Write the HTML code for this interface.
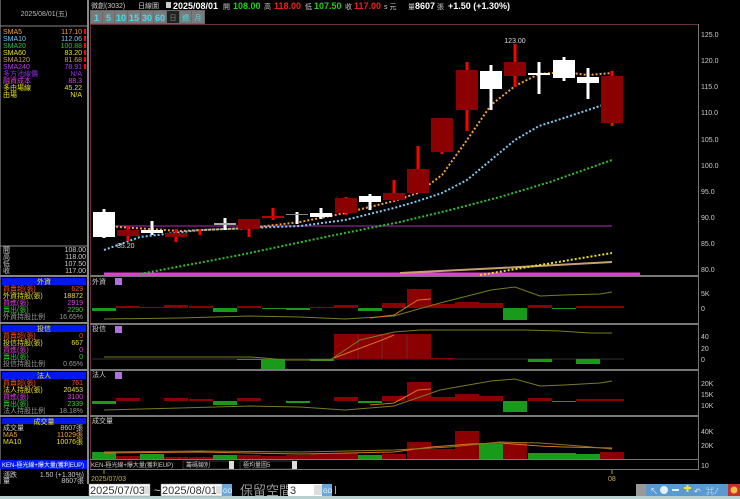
<!DOCTYPE html>
<html><head><meta charset="utf-8"><style>
html,body{margin:0;padding:0;background:#000;width:740px;height:499px;overflow:hidden}
svg{display:block}
text{font-family:"Liberation Sans","Noto Sans CJK TC",sans-serif}
.s{font-size:7px}
.m{font-size:8px}
</style></head><body>
<svg width="740" height="499" viewBox="0 0 740 499" xmlns="http://www.w3.org/2000/svg">
<rect width="740" height="499" fill="#000"/>
<rect x="87" y="0" width="2" height="484" fill="#8a8a8a"/>
<rect x="0" y="0" width="1" height="484" fill="#555"/>
<line x1="0" y1="26" x2="87" y2="26" stroke="#888"/>
<text x="44" y="16" class="s" fill="#bbb" text-anchor="middle">2025/08/01(五)</text>
<g class="s">
<text x="3" y="34" fill="#f0a040">SMA5</text><text x="82" y="34" fill="#f0a040" text-anchor="end">117.10</text>
<text x="3" y="41" fill="#7fc8f0">SMA10</text><text x="82" y="41" fill="#7fc8f0" text-anchor="end">112.06</text>
<text x="3" y="48" fill="#30c030">SMA20</text><text x="82" y="48" fill="#30c030" text-anchor="end">100.88</text>
<text x="3" y="55" fill="#e8e020">SMA60</text><text x="82" y="55" fill="#e8e020" text-anchor="end">83.20</text>
<text x="3" y="62" fill="#c8a070">SMA120</text><text x="82" y="62" fill="#c8a070" text-anchor="end">81.68</text>
<text x="3" y="69" fill="#b040e0">SMA240</text><text x="82" y="69" fill="#b040e0" text-anchor="end">78.91</text>
<text x="3" y="76" fill="#9030e0">多方池線價</text><text x="82" y="76" fill="#9030e0" text-anchor="end">N/A</text>
<text x="3" y="83" fill="#e040e0">融資成本</text><text x="82" y="83" fill="#e040e0" text-anchor="end">88.3</text>
<text x="3" y="90" fill="#e8e020">多由場線</text><text x="82" y="90" fill="#e8e020" text-anchor="end">45.22</text>
<text x="3" y="97" fill="#e8e020">由場</text><text x="82" y="97" fill="#e8e020" text-anchor="end">N/A</text>
</g>
<g fill="#f00"><rect x="84" y="29" width="2" height="5"/><rect x="84" y="36" width="2" height="5"/><rect x="84" y="43" width="2" height="5"/><rect x="84" y="50" width="2" height="5"/><rect x="84" y="57" width="2" height="5"/><rect x="84" y="64" width="2" height="5"/></g>
<line x1="0" y1="246" x2="87" y2="246" stroke="#888"/>
<g class="s" fill="#ccc">
<text x="3" y="252">開</text><text x="86" y="252" text-anchor="end">108.00</text>
<text x="3" y="259">高</text><text x="86" y="259" text-anchor="end">118.00</text>
<text x="3" y="266">低</text><text x="86" y="266" text-anchor="end">107.50</text>
<text x="3" y="273">收</text><text x="86" y="273" text-anchor="end">117.00</text>
</g>
<line x1="0" y1="276" x2="87" y2="276" stroke="#888" stroke-width="2"/>
<rect x="2" y="278" width="84" height="7" fill="#0018f0"/>
<text x="44" y="284" class="s" fill="#f0e000" text-anchor="middle">外資</text>
<g class="s">
<text x="3" y="291" fill="#ff5020">買賣超(張)</text><text x="83" y="291" fill="#ff5020" text-anchor="end">629</text>
<text x="3" y="298" fill="#e8e020">外資持股(張)</text><text x="83" y="298" fill="#e8e020" text-anchor="end">18872</text>
<text x="3" y="305" fill="#e040e0">買進(張)</text><text x="83" y="305" fill="#e040e0" text-anchor="end">2919</text>
<text x="3" y="312" fill="#30d030">賣出(張)</text><text x="83" y="312" fill="#30d030" text-anchor="end">2290</text>
<text x="3" y="319" fill="#999">外資持股比例</text><text x="83" y="319" fill="#999" text-anchor="end">16.65%</text>
</g>
<line x1="0" y1="323" x2="87" y2="323" stroke="#888" stroke-width="2"/>
<rect x="2" y="325" width="84" height="7" fill="#0018f0"/>
<text x="44" y="331" class="s" fill="#f0e000" text-anchor="middle">投信</text>
<g class="s">
<text x="3" y="338" fill="#ff5020">買賣超(張)</text><text x="83" y="338" fill="#ff5020" text-anchor="end">0</text>
<text x="3" y="345" fill="#e8e020">投信持股(張)</text><text x="83" y="345" fill="#e8e020" text-anchor="end">667</text>
<text x="3" y="352" fill="#e040e0">買進(張)</text><text x="83" y="352" fill="#e040e0" text-anchor="end">0</text>
<text x="3" y="359" fill="#30d030">賣出(張)</text><text x="83" y="359" fill="#30d030" text-anchor="end">0</text>
<text x="3" y="366" fill="#999">投信持股比例</text><text x="83" y="366" fill="#999" text-anchor="end">0.65%</text>
</g>
<line x1="0" y1="370" x2="87" y2="370" stroke="#888" stroke-width="2"/>
<rect x="2" y="372" width="84" height="7" fill="#0018f0"/>
<text x="44" y="378" class="s" fill="#f0e000" text-anchor="middle">法人</text>
<g class="s">
<text x="3" y="385" fill="#ff5020">買賣超(張)</text><text x="83" y="385" fill="#ff5020" text-anchor="end">761</text>
<text x="3" y="392" fill="#e8e020">法人持股(張)</text><text x="83" y="392" fill="#e8e020" text-anchor="end">20453</text>
<text x="3" y="399" fill="#e040e0">買進(張)</text><text x="83" y="399" fill="#e040e0" text-anchor="end">3100</text>
<text x="3" y="406" fill="#30d030">賣出(張)</text><text x="83" y="406" fill="#30d030" text-anchor="end">2339</text>
<text x="3" y="413" fill="#999">法人持股比例</text><text x="83" y="413" fill="#999" text-anchor="end">18.18%</text>
</g>
<line x1="0" y1="416" x2="87" y2="416" stroke="#888" stroke-width="2"/>
<rect x="2" y="418" width="84" height="6" fill="#0018f0"/>
<text x="44" y="424" class="s" fill="#f0e000" text-anchor="middle">成交量</text>
<g class="s">
<text x="3" y="430" fill="#ccc">成交量</text><text x="83" y="430" fill="#ccc" text-anchor="end">8607張</text>
<text x="3" y="437" fill="#f0a040">MA5</text><text x="83" y="437" fill="#f0a040" text-anchor="end">11029張</text>
<text x="3" y="444" fill="#e8e020">MA10</text><text x="83" y="444" fill="#e8e020" text-anchor="end">10076張</text>
</g>
<rect x="0" y="460" width="87" height="9" fill="#0018f0"/>
<text x="2" y="467" font-size="6" fill="#fff">KEN-極光線+爆大量(獲利EUP)</text>
<g class="s" fill="#ccc">
<text x="3" y="477">漲跌</text><text x="84" y="477" text-anchor="end">1.50 (+1.30%)</text>
<text x="3" y="483">量</text><text x="84" y="483" text-anchor="end">8607張</text>
</g>

<text x="91" y="8" class="s" fill="#ccc">微創(3032)</text>
<text x="138" y="8" class="s" fill="#ccc">日線圖</text>
<rect x="166" y="2" width="5" height="6" fill="#ccc"/>
<g font-size="9" font-weight="bold">
<text x="173" y="9" fill="#fff">2025/08/01</text>
<text x="223" y="9" class="s" fill="#ccc" font-weight="normal">開</text>
<text x="233" y="9" fill="#20d020">108.00</text>
<text x="264" y="9" class="s" fill="#ccc" font-weight="normal">高</text>
<text x="274" y="9" fill="#f02020">118.00</text>
<text x="305" y="9" class="s" fill="#ccc" font-weight="normal">低</text>
<text x="314" y="9" fill="#20d020">107.50</text>
<text x="345" y="9" class="s" fill="#ccc" font-weight="normal">收</text>
<text x="354" y="9" fill="#f02020">117.00</text>
<text x="384" y="9" class="s" fill="#ccc" font-weight="normal">s 元</text>
<text x="408" y="9" class="s" fill="#ccc" font-weight="normal">量</text>
<text x="415" y="9" fill="#fff">8607</text>
<text x="437" y="9" class="s" fill="#ccc" font-weight="normal">張</text>
<text x="448" y="9" fill="#fff">+1.50 (+1.30%)</text>
</g>
<rect x="90" y="10" width="115" height="14" fill="#6a6a6a"/>
<g fill="#7a7a7a"><rect x="91" y="11" width="11" height="12"/><rect x="103" y="11" width="11" height="12"/><rect x="115" y="11" width="12" height="12"/><rect x="128" y="11" width="12" height="12"/><rect x="141" y="11" width="12" height="12"/><rect x="154" y="11" width="12" height="12"/><rect x="180" y="11" width="11" height="12"/><rect x="192" y="11" width="12" height="12"/></g>
<rect x="167" y="11" width="12" height="12" fill="#222"/>
<g font-size="9" font-weight="bold" fill="#40e0f0" text-anchor="middle">
<text x="96.5" y="21">1</text><text x="108.5" y="21">5</text><text x="121" y="21">10</text><text x="134" y="21">15</text><text x="147" y="21">30</text><text x="160" y="21">60</text>
</g>
<g class="s" fill="#40e0f0" text-anchor="middle"><text x="173" y="20" fill="#888">日</text><text x="185.5" y="20">週</text><text x="198" y="20">月</text></g>

<line x1="90" y1="24.5" x2="699" y2="24.5" stroke="#6a3040"/>
<line x1="698.5" y1="24" x2="698.5" y2="470" stroke="#777"/>
<line x1="90.5" y1="24" x2="90.5" y2="470" stroke="#6a3040"/>
<g fill="#777"><rect x="90" y="275" width="609" height="2"/><rect x="90" y="323" width="609" height="2"/><rect x="90" y="369" width="609" height="2"/><rect x="90" y="415" width="609" height="2"/><rect x="90" y="459" width="609" height="1"/><rect x="90" y="469" width="609" height="1"/></g>

<g class="s" fill="#ccc">
<text x="701" y="37">125.0</text><text x="701" y="63">120.0</text><text x="701" y="89">115.0</text><text x="701" y="115">110.0</text><text x="701" y="142">105.0</text><text x="701" y="168">100.0</text><text x="701" y="194">95.0</text><text x="701" y="220">90.0</text><text x="701" y="246">85.0</text><text x="701" y="272">80.0</text>
<text x="701" y="296">5K</text><text x="701" y="311">0</text>
<text x="701" y="339">40</text><text x="701" y="351">20</text><text x="701" y="362">0</text>
<text x="701" y="386">20K</text><text x="701" y="397">15K</text><text x="701" y="408">10K</text>
<text x="701" y="434">40K</text><text x="701" y="448">20K</text><text x="701" y="468">10</text>
</g>

<line x1="104" y1="226" x2="612" y2="226" stroke="#7a1a7a" stroke-width="1.5"/>
<line x1="104" y1="274" x2="640" y2="274" stroke="#e040d0" stroke-width="3"/>
<polyline fill="none" stroke="#c8a070" stroke-width="2" points="400,273 500,268 612,262"/>
<polyline fill="none" stroke="#e8e020" stroke-width="2" stroke-dasharray="2,2" points="480,275 540,265 612,253"/>
<polyline fill="none" stroke="#30c030" stroke-width="2" stroke-dasharray="2,2" points="140,274 240,255 330,236 400,222 450,210 500,197 550,182 612,160"/>
<polyline fill="none" stroke="#7fc8f0" stroke-width="2" stroke-dasharray="2,2" points="104,250 140,237 200,230 300,226 345,220 394,208 418,201 442,193 467,180 491,160 515,140 539,126 564,118 588,110 612,102"/>
<polyline fill="none" stroke="#f0a040" stroke-width="2" stroke-dasharray="2,2" points="104,226 180,231 250,228 300,222 345,213 394,201 418,193 442,175 467,140 491,105 515,86 539,74 564,72 588,75 612,73"/>

<g fill="#f00">
<rect x="126.5" y="226" width="3" height="15"/><rect x="174.5" y="229" width="3" height="13"/><rect x="198.5" y="229" width="3" height="6"/><rect x="247.5" y="219" width="3" height="18"/><rect x="271.5" y="208" width="3" height="12"/><rect x="344.5" y="197" width="3" height="18"/><rect x="392.5" y="180" width="3" height="21"/><rect x="416.5" y="146" width="3" height="47"/><rect x="440.5" y="118" width="3" height="36"/><rect x="465.5" y="62" width="3" height="69"/><rect x="513.5" y="44" width="3" height="43"/><rect x="610.5" y="71" width="3" height="55"/>
</g>
<g fill="#8b0000">
<rect x="117" y="230" width="22" height="6"/><rect x="165" y="233" width="22" height="4"/><rect x="238" y="219" width="22" height="10"/><rect x="262" y="216" width="22" height="2" fill="#c00000"/><rect x="335" y="198" width="22" height="15"/><rect x="383" y="193" width="22" height="7"/><rect x="407" y="169" width="22" height="24"/><rect x="431" y="118" width="22" height="34"/><rect x="456" y="70" width="22" height="40"/><rect x="504" y="62" width="22" height="14"/><rect x="601" y="76" width="22" height="47"/>
</g>
<g fill="#fff">
<rect x="102.5" y="209" width="3" height="29"/><rect x="93" y="212" width="22" height="25"/>
<rect x="150.5" y="221" width="3" height="14"/><rect x="141" y="230" width="22" height="3"/>
<rect x="223.5" y="218" width="3" height="12"/><rect x="214" y="223" width="22" height="2" fill="#aaa"/>
<rect x="295.5" y="212" width="3" height="12"/><rect x="286" y="214" width="22" height="1" fill="#888"/>
<rect x="319.5" y="208" width="3" height="11"/><rect x="310" y="213" width="22" height="4"/>
<rect x="368.5" y="194" width="3" height="16"/><rect x="359" y="196" width="22" height="6"/>
<rect x="489.5" y="65" width="3" height="45"/><rect x="480" y="71" width="22" height="18"/>
<rect x="537.5" y="62" width="3" height="32"/><rect x="528" y="73" width="22" height="2"/>
<rect x="562.5" y="57" width="3" height="24"/><rect x="553" y="60" width="22" height="18"/>
<rect x="586.5" y="68" width="3" height="31"/><rect x="577" y="77" width="22" height="6"/>
</g>
<text x="515" y="43" class="s" fill="#ddd" text-anchor="middle">123.00</text>
<text x="117" y="248" class="s" fill="#ddd">85.20</text>

<g class="s" fill="#ccc"><text x="92" y="284">外資</text><text x="92" y="331">投信</text><text x="92" y="377">法人</text><text x="92" y="423">成交量</text></g>
<g fill="#b070e0"><rect x="115" y="278" width="7" height="7"/><rect x="115" y="326" width="7" height="7"/><rect x="115" y="372" width="7" height="7"/></g>

<g fill="#1a9a1a"><rect x="92" y="308" width="24" height="3"/><rect x="213" y="308" width="24" height="4"/><rect x="262" y="308" width="24" height="1"/><rect x="286" y="308" width="24" height="2"/><rect x="358" y="308" width="24" height="3"/><rect x="503" y="308" width="24" height="12"/><rect x="552" y="308" width="24" height="1"/></g>
<g fill="#8b0000"><rect x="116" y="306" width="24" height="2"/><rect x="140" y="307" width="24" height="1"/><rect x="164" y="305" width="24" height="3"/><rect x="189" y="306" width="24" height="2"/><rect x="237" y="306" width="24" height="2"/><rect x="310" y="307" width="24" height="1"/><rect x="334" y="305" width="24" height="3"/><rect x="382" y="303" width="24" height="5"/><rect x="407" y="289" width="24" height="19"/><rect x="431" y="304" width="24" height="4"/><rect x="455" y="302" width="24" height="6"/><rect x="479" y="303" width="24" height="5"/><rect x="528" y="305" width="24" height="3"/><rect x="576" y="306" width="24" height="2"/><rect x="600" y="306" width="24" height="2"/></g>
<polyline fill="none" stroke="#7a7a20" stroke-width="1" points="104,319 180,318 250,316 300,317 345,319 394,316 440,303 491,290 515,287 540,296 564,295 600,294 612,292"/>
<polyline fill="none" stroke="#e07020" stroke-width="1" points="370,318 394,315 418,300 431,299"/>

<line x1="92" y1="359" x2="624" y2="359" stroke="#333"/>
<g fill="#1a9a1a"><rect x="261" y="359" width="24" height="10"/><rect x="237" y="359" width="24" height="1"/><rect x="310" y="359" width="24" height="2"/><rect x="528" y="359" width="24" height="3"/><rect x="576" y="359" width="24" height="5"/></g>
<g fill="#8b0000"><rect x="334" y="334" width="97" height="25"/><rect x="431" y="358" width="24" height="1"/></g>
<g stroke="#555" stroke-width="0.5"><line x1="358" y1="334" x2="358" y2="359"/><line x1="382" y1="334" x2="382" y2="359"/><line x1="407" y1="335" x2="407" y2="359"/></g>
<polyline fill="none" stroke="#7a7a20" stroke-width="1" points="104,357 250,357 265,358 285,360 330,360 360,340 394,332 420,330 460,330 525,330 560,331 590,333 612,333"/>
<polyline fill="none" stroke="#e07020" stroke-width="1" points="334,358 382,340 394,335"/>

<g fill="#1a9a1a"><rect x="92" y="401" width="24" height="3"/><rect x="213" y="401" width="24" height="4"/><rect x="286" y="401" width="24" height="2"/><rect x="358" y="401" width="24" height="2"/><rect x="503" y="401" width="24" height="11"/><rect x="552" y="401" width="24" height="1"/></g>
<g fill="#8b0000"><rect x="116" y="398" width="24" height="3"/><rect x="164" y="398" width="24" height="3"/><rect x="189" y="399" width="24" height="2"/><rect x="237" y="398" width="24" height="3"/><rect x="334" y="397" width="24" height="4"/><rect x="382" y="396" width="24" height="5"/><rect x="407" y="382" width="24" height="19"/><rect x="431" y="397" width="24" height="4"/><rect x="455" y="394" width="24" height="7"/><rect x="479" y="396" width="24" height="5"/><rect x="528" y="398" width="24" height="3"/><rect x="576" y="399" width="24" height="2"/><rect x="600" y="399" width="24" height="2"/></g>
<polyline fill="none" stroke="#7a7a20" stroke-width="1" points="104,410 180,408 250,406 300,407 345,410 394,406 440,390 491,381 515,379 540,386 564,385 600,383 612,381"/>
<polyline fill="none" stroke="#e07020" stroke-width="1" points="370,405 394,403 418,390 431,389"/>

<g fill="#1a9a1a"><rect x="92" y="452" width="24" height="7"/><rect x="140" y="454" width="24" height="5"/><rect x="213" y="455" width="24" height="4"/><rect x="358" y="455" width="24" height="4"/><rect x="479" y="444" width="24" height="15"/><rect x="528" y="453" width="24" height="6"/><rect x="552" y="453" width="24" height="6"/><rect x="576" y="454" width="24" height="5"/></g>
<g fill="#8b0000"><rect x="116" y="456" width="24" height="3"/><rect x="164" y="457" width="24" height="2"/><rect x="189" y="457" width="24" height="2"/><rect x="237" y="455" width="24" height="4"/><rect x="262" y="456" width="24" height="3"/><rect x="286" y="455" width="24" height="4"/><rect x="310" y="454" width="24" height="5"/><rect x="334" y="453" width="24" height="6"/><rect x="382" y="454" width="24" height="5"/><rect x="407" y="442" width="24" height="17"/><rect x="431" y="449" width="24" height="10"/><rect x="455" y="431" width="24" height="28"/><rect x="503" y="442" width="24" height="17"/><rect x="600" y="452" width="24" height="7"/></g>
<polyline fill="none" stroke="#e07020" stroke-width="1" points="104,453 200,452 300,454 394,452 431,447 470,444 500,443 540,446 564,447 612,448"/>
<polyline fill="none" stroke="#8a7a20" stroke-width="1" points="104,452 200,451 300,452 394,450 450,447 500,442 540,443 580,446 612,449"/>

<text x="91" y="467" font-size="6" fill="#ccc">KEN-極光線+爆大量(獲利EUP)</text>
<rect x="183" y="461" width="50" height="8" fill="#000" stroke="#666" stroke-width="0.5"/>
<text x="186" y="467" font-size="6" fill="#ccc">籌碼類別</text>
<rect x="229" y="461" width="5" height="8" fill="#ddd"/>
<rect x="240" y="461" width="55" height="8" fill="#000" stroke="#666" stroke-width="0.5"/>
<text x="243" y="467" font-size="6" fill="#ccc">極均量圖5</text>
<rect x="292" y="461" width="5" height="8" fill="#ddd"/>

<line x1="104" y1="470" x2="104" y2="474" stroke="#aa9a40"/>
<line x1="612" y1="470" x2="612" y2="474" stroke="#aa9a40"/>
<text x="91" y="481" class="s" fill="#c8b040">2025/07/03</text>
<text x="608" y="481" class="s" fill="#c8b040">08</text>

<rect x="0" y="484" width="740" height="15" fill="#000"/>
<rect x="0" y="496" width="740" height="3" fill="#b8d0d0"/>
<rect x="89" y="484" width="61" height="12" fill="#fff" stroke="#888" stroke-width="0.5"/>
<text x="90" y="494" font-size="11" fill="#333">2025/07/03</text>
<rect x="144" y="486" width="6" height="8" fill="#ddd"/>
<text x="154" y="494" font-size="11" fill="#ddd">~</text>
<rect x="161" y="484" width="61" height="12" fill="#fff" stroke="#888" stroke-width="0.5"/>
<text x="162" y="494" font-size="11" fill="#333">2025/08/01</text>
<rect x="216" y="486" width="6" height="8" fill="#ddd"/>
<rect x="222" y="484" width="10" height="12" fill="#6aa8d8"/>
<text x="223" y="493" font-size="6" fill="#fff">GO</text>
<text x="240" y="495" font-size="13" fill="#999">保留空間</text>
<rect x="288" y="484" width="34" height="12" fill="#fff"/>
<text x="290" y="494" font-size="11" fill="#333">3</text>
<rect x="314" y="485" width="8" height="10" fill="#ddd"/>
<rect x="322" y="484" width="10" height="12" fill="#6aa8d8"/>
<text x="323" y="493" font-size="6" fill="#fff">GO</text>
<rect x="335" y="486" width="1" height="8" fill="#aaa"/>
<rect x="636" y="484" width="10" height="12" fill="#999"/>
<rect x="646" y="484" width="94" height="12" fill="#5a9ad0"/>
<g fill="#e0f0ff"><text x="650" y="494" class="m">↖</text><circle cx="664" cy="490" r="4"/><rect x="672" y="489" width="7" height="2"/><rect x="684" y="487" width="7" height="2" fill="#f0e040"/><rect x="686.5" y="485" width="2" height="7" fill="#f0e040"/><text x="694" y="494" class="m">↶</text><text x="706" y="494" class="m">⌘</text><text x="716" y="494" class="m">⁄</text></g>
<rect x="728" y="484" width="12" height="12" fill="#c83030"/>
<circle cx="734" cy="490" r="3.5" fill="#f0c040"/>
</svg>
</body></html>
